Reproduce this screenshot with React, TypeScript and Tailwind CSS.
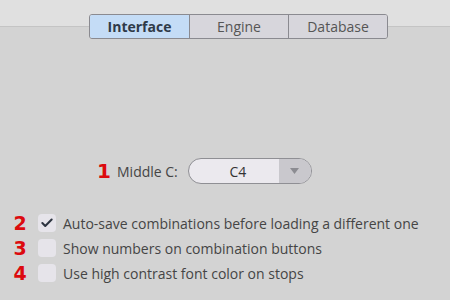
import { Check } from 'lucide-react';

const TABS = ['Interface', 'Engine', 'Database'];

const OPTIONS = [
  { n: '2', label: 'Auto-save combinations before loading a different one', checked: true },
  { n: '3', label: 'Show numbers on combination buttons', checked: false },
  { n: '4', label: 'Use high contrast font color on stops', checked: false },
];

const Num = ({ n, big }: { n: string; big?: boolean }) => (
  <span
    className={
      'w-[14px] text-center font-black leading-none text-[#dc0a0e] [font-family:"DejaVu_Sans",sans-serif] ' +
      (big ? 'text-[20px]' : 'text-[19px]')
    }
  >
    {n}
  </span>
);

export default function App() {
  return (
    <div className="relative h-[300px] w-[450px] overflow-hidden bg-[#d3d3d3] text-[14px] text-[#454545] [font-family:'Open_Sans',sans-serif]">
      <div className="h-[27px] border-b border-[#c4c4c4] bg-[#e0e0e0]" />
      <div className="absolute left-[89px] top-[14px] flex h-[25px] overflow-hidden rounded-[3px] border border-[#8a8a90] text-[14px]">
        {TABS.map((t, i) => (
          <div
            key={t}
            className={
              'flex w-[99px] items-center justify-center ' +
              (i > 0 ? 'border-l border-[#8a8a90] ' : '') +
              (i === 0 ? 'bg-[#c4dcf6] font-bold text-[#2f3a48]' : 'bg-[#d7d6dc] text-[#555]')
            }
          >
            {t}
          </div>
        ))}
      </div>

      <div className="mt-[131px] flex items-center pl-[97px]">
        <Num n="1" big />
        <span className="ml-[6px]">Middle C:</span>
        <div className="ml-[10px] flex h-[26px] w-[124px] overflow-hidden rounded-full border border-[#8f8f94] bg-[#ebe9ee]">
          <span className="flex flex-1 items-center justify-center pl-[8px] text-[#333]">C4</span>
          <span className="flex w-[32px] items-center justify-center bg-[#c9c8cd]">
            <svg width="9" height="6" viewBox="0 0 9 6">
              <path d="M0 0h9L4.5 6z" fill="#8c8c92" />
            </svg>
          </span>
        </div>
      </div>

      <div className="mt-[30px] flex flex-col gap-[7px] pl-[13px]">
        {OPTIONS.map(o => (
          <div key={o.n} className="flex h-[18px] items-center">
            <Num n={o.n} />
            <span className="ml-[11px] flex h-[18px] w-[18px] items-center justify-center rounded-[4px] bg-[#e6e4ea]">
              {o.checked && <Check size={14} strokeWidth={3.5} className="text-[#2d3440]" />}
            </span>
            <span className="ml-[7px]">{o.label}</span>
          </div>
        ))}
      </div>
    </div>
  );
}
